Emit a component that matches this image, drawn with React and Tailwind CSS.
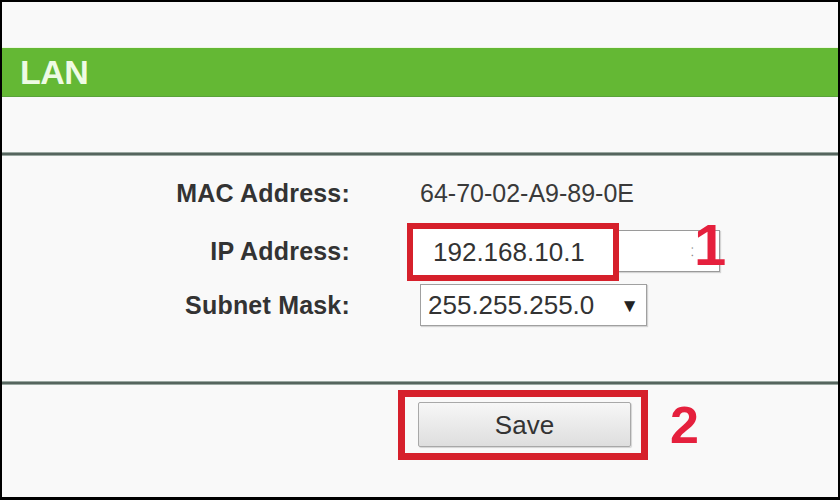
import React from "react";

const font = { fontFamily: '"Liberation Sans", Arial, sans-serif' };

export default function App() {
  return (
    <div
      className="w-[840px] h-[500px] bg-black pt-[2px] pl-[2px] pr-[2px] pb-[3px] box-border"
      style={font}
    >
      <div className="w-full h-full bg-[#f9f9f9] flex flex-col overflow-hidden">
        {/* top spacer */}
        <div className="h-[45px] shrink-0" />
        <div className="h-[1px] bg-[#eef7e4] shrink-0" />
        {/* green header */}
        <div className="h-[49px] shrink-0 bg-[#64b834] border-b border-[#5aa33a] flex items-center pl-[18px]">
          <span className="text-[34px] font-bold text-[#eefbe4] leading-none tracking-[-0.5px]">LAN</span>
        </div>
        <div className="h-[55px] shrink-0" />
        {/* separator */}
        <div className="h-[4px] shrink-0 bg-[#56655e] border-t border-b border-[#9aa8a1]" />

        {/* form */}
        <div className="flex flex-col pt-[16px] shrink-0">
          <div className="flex items-center h-[42px]">
            <div className="w-[348px] text-right text-[25px] font-bold text-[#333] leading-none tracking-[0.2px]">MAC Address:</div>
            <div className="ml-[70px] text-[25px] text-[#3a3a3a] leading-none">64-70-02-A9-89-0E</div>
          </div>
          <div className="flex items-center h-[42px] mt-[16px]">
            <div className="w-[348px] text-right text-[25px] font-bold text-[#333] leading-none tracking-[0.2px]">IP Address:</div>
            <div className="ml-[70px] relative w-[300px] h-[42px] bg-white border border-[#9a9a9a] shadow-[1px_1px_1px_rgba(0,0,0,0.15)]">
              <div className="absolute left-[-14px] top-[-8px] w-[212px] h-[58px] border-[6px] border-[#d6202b] bg-white flex items-center pl-[20px]">
                <span className="text-[26px] text-[#333] leading-none">192.168.10.1</span>
              </div>
              <span className="absolute left-[270px] top-[15px] text-[12px] text-[#888] leading-none">⁚</span>
              <span className="absolute left-[273px] top-[-15px] text-[58px] font-bold text-[#e5203d] leading-none">1</span>
            </div>
          </div>
          <div className="flex items-center h-[42px] mt-[12px]">
            <div className="w-[348px] text-right text-[25px] font-bold text-[#333] leading-none tracking-[0.2px]">Subnet Mask:</div>
            <div className="ml-[70px] w-[227px] h-[42px] bg-white border border-[#a0a0a0] shadow-[1px_1px_1px_rgba(0,0,0,0.15)] flex items-center pl-[7px] pr-[7px] justify-between">
              <span className="text-[26px] text-[#333] leading-none">255.255.255.0</span>
              <span className="text-[19px] text-[#222] leading-none">▼</span>
            </div>
          </div>
        </div>

        <div className="flex-1" />
        {/* separator 2 */}
        <div className="h-[4px] shrink-0 bg-[#56655e] border-t border-b border-[#9aa8a1]" />

        {/* save row */}
        <div className="flex items-center pl-[396px] mt-[5px] shrink-0">
          <div className="w-[250px] h-[70px] border-[7px] border-[#d6202b] bg-[#f9f9f9] pl-[13px] pr-[10px] pt-[5px] pb-[6px]">
            <div className="w-full h-full rounded-[2px] border border-[#a8a8a8] bg-gradient-to-b from-[#f7f7f7] to-[#dedede] flex items-center justify-center shadow-[1px_1px_1px_rgba(0,0,0,0.15)]">
              <span className="text-[26px] text-[#333] leading-none">Save</span>
            </div>
          </div>
          <span className="ml-[22px] text-[52px] font-bold text-[#e5203d] leading-none">2</span>
        </div>
        <div className="h-[37px] shrink-0" />
      </div>
    </div>
  );
}
